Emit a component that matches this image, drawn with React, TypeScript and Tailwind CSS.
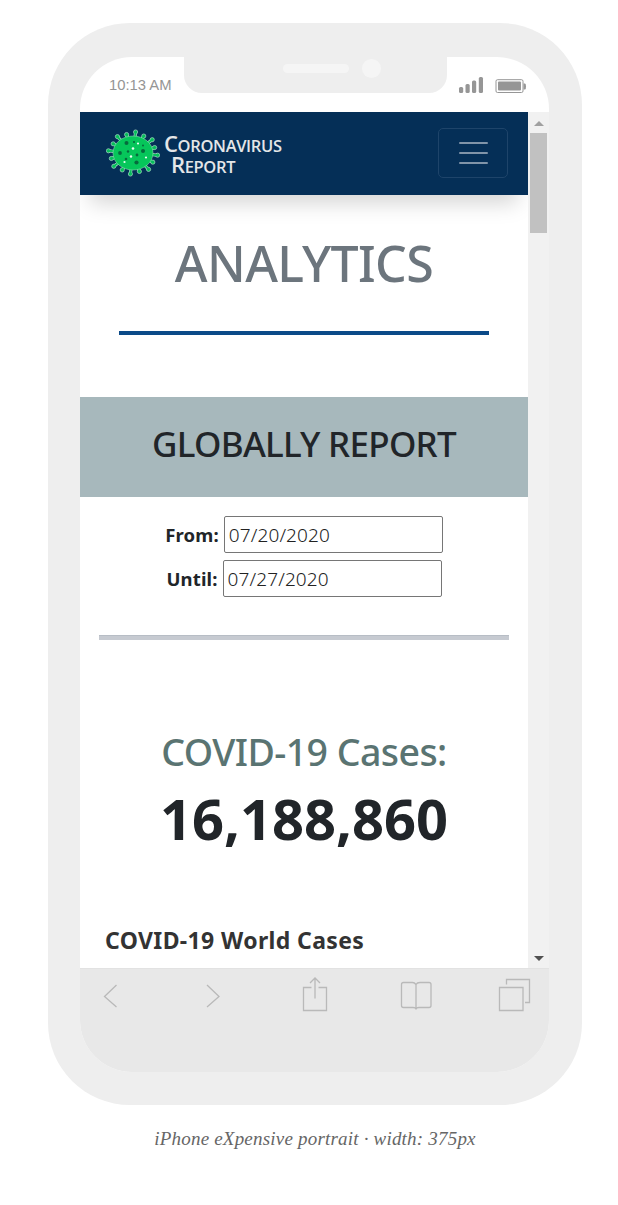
const spikes = Array.from({ length: 16 }, (_, i) => i * 22.5 + 6);

function VirusLogo() {
  return (
    <svg width="54" height="48" viewBox="-27 -24 54 48" className="shrink-0">
      {spikes.map((a, i) => {
        const r = (a * Math.PI) / 180;
        const k = i % 2 ? 0.94 : 1.03;
        const x = Math.cos(r);
        const y = Math.sin(r);
        return (
          <g key={a} stroke="#bfe9d4" fill="#08bd5c">
            <line x1={x * 18} y1={y * 15} x2={x * 24 * k} y2={y * 20.5 * k} strokeWidth="3" />
            <circle cx={x * 24 * k} cy={y * 20.5 * k} r="2.1" strokeWidth=".6" />
            <line x1={x * 17} y1={y * 14} x2={x * 24 * k} y2={y * 20.5 * k} strokeWidth="2" stroke="#08bd5c" />
          </g>
        );
      })}
      <ellipse rx="20" ry="17" fill="#06c65a" stroke="#9be4bd" strokeWidth=".5" />
      <g fill="#066b3d">
        <circle cx="-6.5" cy="-10" r="2" />
        <circle cx="10" cy="-2" r="2" />
        <circle cx="-13" cy="0" r="1.9" />
        <circle cx="3.5" cy="9.5" r="2.1" />
        <circle cx="4" cy="2" r="1.4" />
        <circle cx="-5" cy="-1.5" r="1.2" />
        <circle cx="-7" cy="6" r="1.3" />
        <circle cx="1" cy="-11" r="1.1" />
        <circle cx="10" cy="-7.5" r="1" />
      </g>
      <g fill="#e9fff2">
        <circle cx="0" cy="-4.5" r="1.3" />
        <circle cx="5" cy="-9.5" r="1.1" />
        <circle cx="-2" cy="3.5" r="1.2" />
        <circle cx="13" cy="4.5" r="1.1" />
        <circle cx="-8.5" cy="9" r="1.1" />
      </g>
    </svg>
  );
}

function StatusBar() {
  return (
    <div className="flex h-[55px] w-[469px] items-start">
      <div className="w-[104px] pt-[20px] pl-[29px] font-['Liberation_Sans',sans-serif] text-[14.8px] leading-[17px] whitespace-nowrap text-[#959595]">
        10:13 AM
      </div>
      <div className="flex h-[36px] w-[263px] items-start rounded-b-[18px] bg-[#eeeeee] pt-[2px] pl-[99px]">
        <div className="mt-[5px] h-[9px] w-[66px] rounded-full bg-[#f5f5f5]" />
        <div className="ml-[13px] size-[19px] rounded-full bg-[#f5f5f5]" />
      </div>
      <svg width="70" height="20" viewBox="0 0 70 20" className="mt-[18px] ml-[11px]">
        <g fill="#969696">
          <rect x="1" y="12" width="4.2" height="6" rx="1.5" />
          <rect x="7.5" y="9" width="4.2" height="9" rx="1.5" />
          <rect x="14" y="5.5" width="4.2" height="12.5" rx="1.5" />
          <rect x="20.8" y="2" width="4.2" height="16" rx="1.5" />
          <rect x="40" y="6.5" width="23" height="9" rx="1" />
          <path d="M65.5 8.500h1.500q1 0 1 3t-1 3h-1.500z" />
        </g>
        <rect x="38" y="4.7" width="27" height="12.8" rx="1.5" fill="none" stroke="#969696" />
      </svg>
    </div>
  );
}

function NavBar() {
  return (
    <header className="flex h-[83px] shrink-0 items-start bg-[#052f57] pl-[26px] shadow-[0_18px_20px_-10px_rgba(0,0,0,0.17)]">
      <div className="flex pt-[17px]">
        <VirusLogo />
        <div className="ml-[4px] pt-[4px] font-['Open_Sans',sans-serif] text-[16.5px] leading-[20.5px] font-semibold tracking-[-0.35px] whitespace-nowrap text-[#e4e6e8]">
          <div className="h-[20.5px]">
            <span className="text-[22px]">C</span>ORONAVIRUS
          </div>
          <div className="h-[20.5px] pl-[7px]">
            <span className="text-[22px]">R</span>EPORT
          </div>
        </div>
      </div>
      <button className="mt-[16px] mr-[20px] ml-auto flex h-[50px] w-[70px] flex-col items-center justify-center gap-[8px] rounded-[5px] border border-[#1e446a]">
        <span className="h-[2px] w-[29px] rounded-full bg-[#8094a9]" />
        <span className="h-[2px] w-[29px] rounded-full bg-[#8094a9]" />
        <span className="h-[2px] w-[29px] rounded-full bg-[#8094a9]" />
      </button>
    </header>
  );
}

function DateField({ label, value }: { label: string; value: string }) {
  return (
    <div className="flex h-[37px] items-center justify-center gap-[5px]">
      <label className="pt-px text-[18.5px] font-bold tracking-[0.15px] whitespace-nowrap">{label}</label>
      <input
        readOnly
        defaultValue={value}
        className="h-[37px] w-[219px] rounded-[2px] border border-[#767676] bg-white pt-px pl-[4px] text-[19px] font-light tracking-[0.12px] text-[#222]"
      />
    </div>
  );
}

function Scrollbar() {
  return (
    <div className="flex w-[21px] shrink-0 flex-col items-center bg-[#f1f1f1]">
      <svg width="10" height="5" viewBox="0 0 10 5" className="mt-[9px]">
        <path d="M0 5L5 0L10 5z" fill="#a0a0a0" />
      </svg>
      <div className="mt-[7px] h-[100px] w-[17px] bg-[#c1c1c1]" />
      <svg width="10" height="5" viewBox="0 0 10 5" className="mt-auto mb-[7px]">
        <path d="M0 0L5 5L10 0z" fill="#505050" />
      </svg>
    </div>
  );
}

function Toolbar() {
  return (
    <div className="h-[104px] w-[469px] border-t border-[#e2e2e2] bg-[#e8e8e8]">
      <svg width="469" height="60" viewBox="80 969 469 60" fill="none" stroke="#b9b9b9" strokeWidth="1.3">
        <path d="M116.500 985L104.500 996.500L116.500 1007" />
        <path d="M207 985L219 996.500L207 1007" />
        <path d="M311.500 987.500H303.500V1010.500H326.500V987.500H318.500M315 998.500V978M310 983L315 978L320 983" />
        <path d="M416 984.500Q414.500 982.500 412.500 982.500H403.500Q401.500 982.500 401.500 984.500V1005.500Q401.500 1007.500 403.500 1007.500H413Q416 1007.500 416 1009.500Q416 1007.500 419 1007.500H429Q431 1007.500 431 1005.500V984.500Q431 982.500 429 982.500H420Q417 982.500 416 984.500V1009.500" />
        <path d="M499.500 987.500H523V1010.500H499.500zM506.500 984.500V979.500H529.500V1002.500H525" />
      </svg>
    </div>
  );
}

export default function App() {
  return (
    <main className="flex h-[1205px] w-[618px] flex-col bg-white pt-[23px] pl-[48px]">
      <section className="h-[1082px] w-[534px] shrink-0 rounded-[82px] bg-[#eeeeee] pt-[34px] pl-[32px]">
        <div className="w-[469px] overflow-hidden rounded-[52px] bg-white">
          <StatusBar />
          <div className="flex h-[856px] w-[469px]">
            <div className="flex w-[448px] flex-col overflow-hidden bg-white font-['Noto_Sans','Open_Sans',sans-serif] text-[#212529]">
              <NavBar />
              <h1 className="mt-[38px] text-center text-[50px] leading-[60px] font-medium tracking-[-0.6px] whitespace-nowrap text-[#6c757d]">
                ANALYTICS
              </h1>
              <div className="mx-auto mt-[38px] h-[4px] w-[370px] shrink-0 bg-[#0b4a88]" />
              <div className="mt-[62px] h-[100px] shrink-0 bg-[#a7b8bc] pt-[17px] text-center">
                <h2 className="text-[35px] leading-[60px] font-medium tracking-[-0.72px] whitespace-nowrap">
                  GLOBALLY REPORT
                </h2>
              </div>
              <div className="mt-[19px] flex flex-col gap-[7px]">
                <DateField label="From:" value="07/20/2020" />
                <DateField label="Until:" value="07/27/2020" />
              </div>
              <div className="mx-auto mt-[38px] h-[5px] w-[410px] shrink-0 border-t border-[#b7bdc5] bg-[#c6cad1]" />
              <h3 className="mt-[82px] text-center text-[37.5px] leading-[60px] font-medium tracking-[-0.57px] whitespace-nowrap text-[#5a7472]">
                COVID-19 Cases:
              </h3>
              <p className="mt-[6px] text-center text-[56px] leading-[60px] font-bold whitespace-nowrap">16,188,860</p>
              <h4 className="mt-[77px] pl-[25px] text-[23px] leading-[30px] font-bold tracking-[0.37px] whitespace-nowrap text-[#333]">
                COVID-19 World Cases
              </h4>
            </div>
            <Scrollbar />
          </div>
          <Toolbar />
        </div>
      </section>
      <p className="mt-[22px] w-[534px] text-center font-['Liberation_Serif',serif] text-[19px] leading-[24px] tracking-[0.2px] whitespace-nowrap text-[#666] italic">
        iPhone eXpensive portrait · width: 375px
      </p>
    </main>
  );
}
